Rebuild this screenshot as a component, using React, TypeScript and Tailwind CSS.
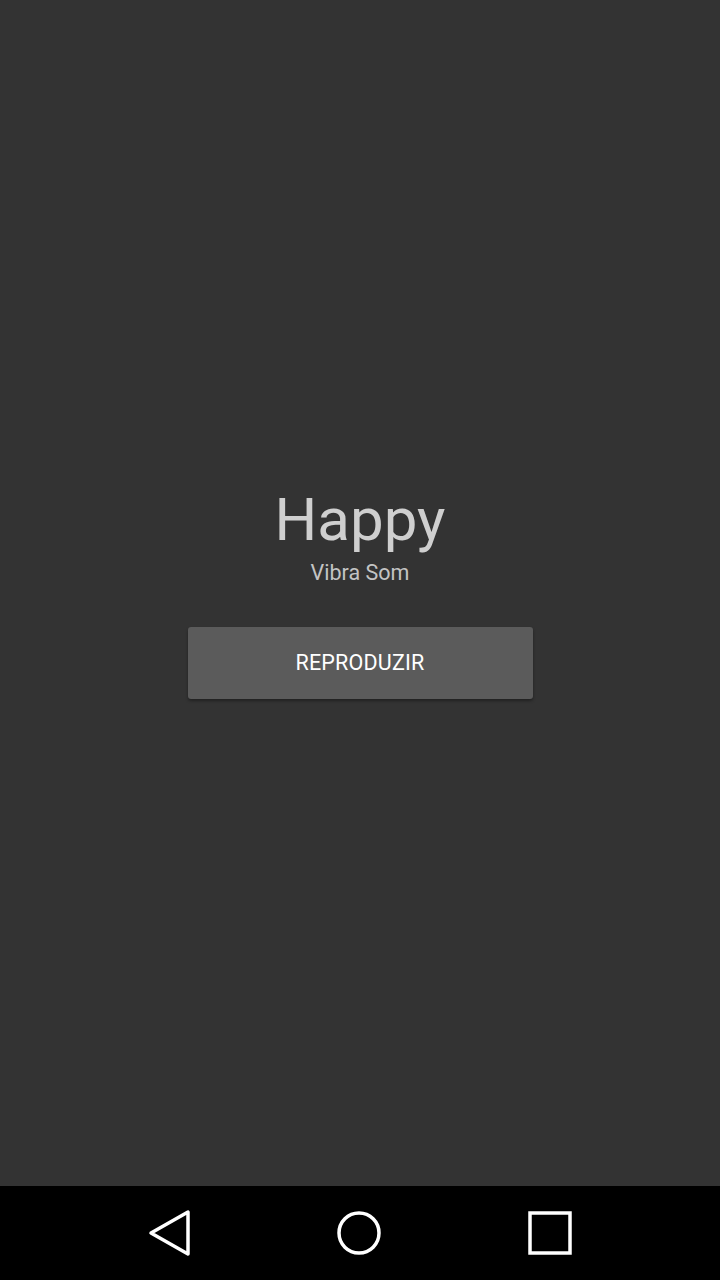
import React from 'react';

const App: React.FC = () => {
    return (
        <div className="w-[720px] h-[1280px] flex flex-col bg-[#333333]" style={{ fontFamily: 'Roboto, "Noto Sans", sans-serif' }}>
            <div className="flex-1 flex flex-col items-center pt-[485px]">
                <h1 className="text-[60px] leading-[70px] text-[#cfcfcf]">Happy</h1>
                <p className="text-[21.5px] leading-[26px] text-[#c4c4c4] mt-[5px]">Vibra Som</p>
                <button className="mt-[41px] w-[345px] h-[72px] bg-[#5b5b5b] rounded-[3px] shadow-[0_2px_3px_rgba(0,0,0,0.35)] text-white text-[21.5px] tracking-[0.2px]">
                    REPRODUZIR
                </button>
            </div>

            <div className="h-[94px] bg-black flex items-center justify-center gap-[145px]">
                <svg width="44" height="48" viewBox="0 0 44 48">
                    <path d="M41 3 L41 45 L4 24 Z" fill="none" stroke="white" strokeWidth="3.5" strokeLinejoin="round" />
                </svg>
                <svg width="46" height="46" viewBox="0 0 46 46">
                    <circle cx="23" cy="23" r="20" fill="none" stroke="white" strokeWidth="3.5" />
                </svg>
                <svg width="46" height="46" viewBox="0 0 46 46">
                    <rect x="3" y="3" width="40" height="40" fill="none" stroke="white" strokeWidth="3.5" />
                </svg>
            </div>
        </div>
    );
};

export default App;
